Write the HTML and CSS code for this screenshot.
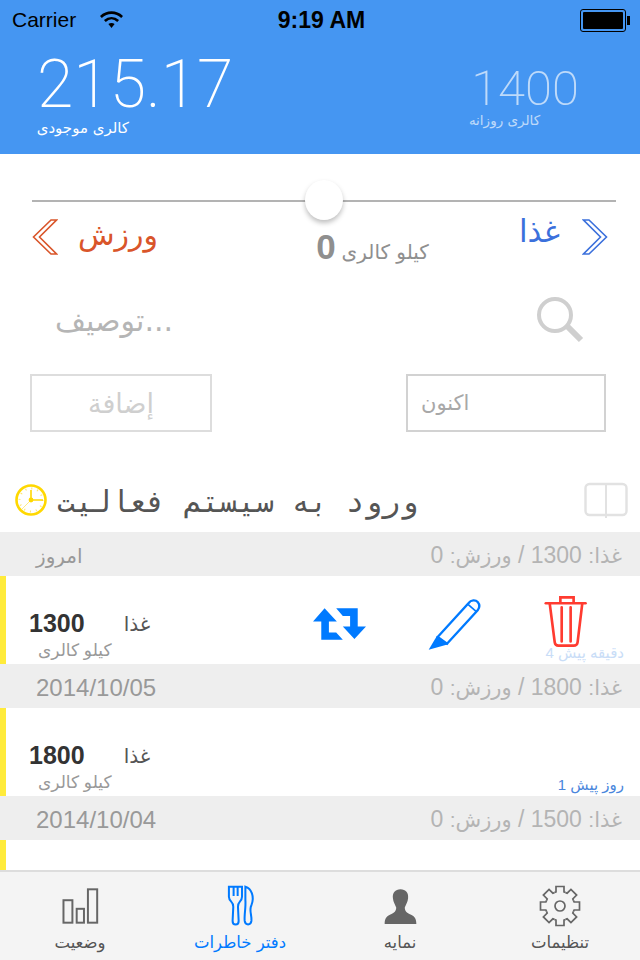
FILE: index.html
```html
<!DOCTYPE html>
<html lang="fa">
<head>
    <meta charset="UTF-8">
    <meta name="viewport" content="width=device-width, initial-scale=1.0">
    <title>Diary</title>
    <link rel="stylesheet" href="styles.css">
</head>

<body>
    <div id="app">
        <header class="top">
            <div class="status">
                <div class="status-left">
                    <span>Carrier</span>
                    <svg class="wifi" width="23" height="20" viewBox="0 0 26 22">
                        <path d="M1 7.5C8 1 18 1 25 7.5" fill="none" stroke="#000" stroke-width="3"/>
                        <path d="M5.5 12C10 8 16 8 20.5 12" fill="none" stroke="#000" stroke-width="3"/>
                        <path d="M9.5 15.5C11.5 14 14.5 14 16.5 15.5L13 20Z" fill="#000"/>
                    </svg>
                </div>
                <span class="clock">9:19 AM</span>
                <div class="battery"><div class="battery-fill"></div></div>
            </div>
            <div class="totals">
                <div class="total">
                    <div class="total-num">215.17</div>
                    <div class="total-label">کالری موجودی</div>
                </div>
                <div class="total total-daily">
                    <div class="total-num">1400</div>
                    <div class="total-label">کالری روزانه</div>
                </div>
            </div>
        </header>

        <section class="entry-form">
            <div class="slider"><span class="thumb"></span></div>

            <div class="kinds">
                <div class="kind kind-sport">
                    <svg width="26" height="36" viewBox="0 0 26 36"><path d="M19 1L1.5 18L19 35L24.5 35L7.5 18L24.5 1Z" fill="none" stroke="#d9552a" stroke-width="1.6"/></svg>
                    <span>ورزش</span>
                </div>
                <div class="kcal"><b>0</b><span>کیلو کالری</span></div>
                <div class="kind kind-food">
                    <span>غذا</span>
                    <svg width="26" height="36" viewBox="0 0 26 36"><path d="M7 1L24.5 18L7 35L1.5 35L18.5 18L1.5 1Z" fill="none" stroke="#3b70dc" stroke-width="1.6"/></svg>
                </div>
            </div>

            <div class="search">
                <span class="search-text">توصیف...</span>
                <svg width="48" height="48" viewBox="0 0 48 48">
                    <circle cx="19" cy="19" r="16" fill="none" stroke="#cfcfcf" stroke-width="4"/>
                    <path d="M31 30L45 44" stroke="#cfcfcf" stroke-width="6"/>
                </svg>
            </div>

            <div class="buttons">
                <div class="btn btn-add">إضافة</div>
                <div class="btn btn-now">اکنون</div>
            </div>
        </section>

        <div class="log-title">
            <div class="log-title-left">
                <svg width="34" height="36" viewBox="0 0 34 36">
                    <circle cx="17" cy="18" r="14.500" fill="#fff" stroke="#ffd800" stroke-width="2.600"/>
                    <circle cx="17" cy="18" r="11.500" fill="none" stroke="#ffe566" stroke-width="2" stroke-dasharray="1 5.020"/>
                    <path d="M17 8V18H29" fill="none" stroke="#ffd800" stroke-width="1.600"/>
                    <path d="M17 18L8 27" fill="none" stroke="#ffe566" stroke-width="0.800"/>
                    <circle cx="17" cy="18" r="2.400" fill="#ffd800"/>
                </svg>
                <span class="log-title-text">ورود به سیستم فعالیت</span>
            </div>
            <svg width="44" height="36" viewBox="0 0 44 36">
                <rect x="1.500" y="2" width="41" height="31" rx="4" fill="none" stroke="#e2e2e2" stroke-width="2.400"/>
                <path d="M22 2V36" stroke="#e2e2e2" stroke-width="2"/>
            </svg>
        </div>

        <div class="log">
            <div class="day">
                <span class="day-name day-today">امروز</span>
                <span class="day-sum"><i>غذا:</i> 1300 / <i>ورزش:</i> 0</span>
            </div>
            <div class="row">
                <div class="row-info">
                    <div class="row-main"><b>1300</b><span>غذا</span></div>
                    <div class="row-unit">کیلو کالری</div>
                </div>
                <div class="row-actions">
                    <svg width="53" height="32" viewBox="40 55 160 95">
                        <path d="M75 55L112 95H88V128H110L130 150H65V95H40Z" fill="#007aff"/>
                        <path d="M110 55H175V110H200L165 148L130 110H152V78H130Z" fill="#007aff"/>
                    </svg>
                    <svg width="55" height="55" viewBox="380 20 165 165">
                        <path d="M412 140L505 38C512 28 526 28 532 35C538 42 538 52 532 60L440 160Z" fill="none" stroke="#007aff" stroke-width="7"/>
                        <path d="M385 178L410 136L444 162Z" fill="#007aff"/>
                        <path d="M503 42L528 64" stroke="#007aff" stroke-width="5"/>
                    </svg>
                    <svg class="trash" width="45" height="53" viewBox="730 15 135 160">
                        <path d="M738 40H858" stroke="#ff3b30" stroke-width="8" stroke-linecap="round"/>
                        <path d="M782 40V22H822V40" fill="none" stroke="#ff3b30" stroke-width="8"/>
                        <path d="M750 42L765 158C766 165 770 168 776 168H822C828 168 833 165 834 158L848 42" fill="none" stroke="#ff3b30" stroke-width="8"/>
                        <path d="M786 52V155M813 52V155" stroke="#ff3b30" stroke-width="8" stroke-linecap="round"/>
                    </svg>
                </div>
                <span class="row-ago row-ago-fresh">دقیقه پیش 4</span>
            </div>
            <div class="day">
                <span class="day-name">2014/10/05</span>
                <span class="day-sum"><i>غذا:</i> 1800 / <i>ورزش:</i> 0</span>
            </div>
            <div class="row">
                <div class="row-info">
                    <div class="row-main"><b>1800</b><span>غذا</span></div>
                    <div class="row-unit">کیلو کالری</div>
                </div>
                <span class="row-ago">روز پیش 1</span>
            </div>
            <div class="day">
                <span class="day-name">2014/10/04</span>
                <span class="day-sum"><i>غذا:</i> 1500 / <i>ورزش:</i> 0</span>
            </div>
            <div class="row row-cut"></div>
        </div>

        <nav class="tabs">
            <div class="tab">
                <svg width="40" height="38" viewBox="60 20 120 115">
                    <rect x="70" y="60" width="27" height="68" fill="none" stroke="#666" stroke-width="6"/>
                    <rect x="110" y="86" width="22" height="42" fill="none" stroke="#666" stroke-width="6"/>
                    <rect x="144" y="27" width="28" height="101" fill="none" stroke="#666" stroke-width="6"/>
                </svg>
                <span>وضعیت</span>
            </div>
            <div class="tab tab-on">
                <svg width="29" height="42" viewBox="555 15 85 125">
                    <path d="M563 20H602V50C602 65 588 65 590 80L592 122C592 136 574 136 574 122L576 80C578 65 563 65 563 50Z" fill="none" stroke="#007aff" stroke-width="6"/>
                    <path d="M577 20V48M589 20V48" stroke="#007aff" stroke-width="6"/>
                    <path d="M612 20C630 25 640 50 630 75C622 90 632 105 630 122C628 136 612 136 610 122C608 105 614 80 612 60Z" fill="none" stroke="#007aff" stroke-width="6"/>
                </svg>
                <span>دفتر خاطرات</span>
            </div>
            <div class="tab">
                <svg width="33" height="37" viewBox="40 22 100 110">
                    <path d="M90 25C106 25 115 36 113 52C112 64 106 72 103 80C103 90 108 96 122 102C134 107 138 116 138 130H42C42 116 46 107 58 102C72 96 77 90 77 80C74 72 68 64 67 52C65 36 74 25 90 25Z" fill="#666"/>
                </svg>
                <span>نمایه</span>
            </div>
            <div class="tab">
                <svg width="42" height="42" viewBox="-21 -21 42 42">
                    <defs>
                        <path id="tooth" d="M-5.550 -13.400L-4 -14.100L-4 -19.500H4L4 -14.100L5.550 -13.400" fill="none" stroke="#666" stroke-width="1.700"/>
                    </defs>
                    <use href="#tooth"/>
                    <use href="#tooth" transform="rotate(45)"/>
                    <use href="#tooth" transform="rotate(90)"/>
                    <use href="#tooth" transform="rotate(135)"/>
                    <use href="#tooth" transform="rotate(180)"/>
                    <use href="#tooth" transform="rotate(225)"/>
                    <use href="#tooth" transform="rotate(270)"/>
                    <use href="#tooth" transform="rotate(315)"/>
                    <circle cx="0" cy="0" r="5" fill="none" stroke="#666" stroke-width="1.700"/>
                </svg>
                <span>تنظیمات</span>
            </div>
        </nav>
    </div>
</body>
</html>
```

FILE: styles.css
```css
* {
    box-sizing: border-box;
}

body {
    margin: 0;
    background-color: #fff;
    font-family: "Liberation Sans", "DejaVu Sans", sans-serif;
}

#app {
    width: 640px;
    height: 960px;
    overflow: hidden;
    display: flex;
    flex-direction: column;
}

.top {
    height: 154px;
    background-color: #4596f2;
    flex: none;
}

.status {
    height: 40px;
    padding: 0 6px 0 12px;
    display: grid;
    grid-template-columns: 1fr auto 1fr;
    align-items: center;
    color: #000;
    font-size: 21px;
}

.status-left {
    display: flex;
    align-items: center;
    gap: 24px;
}

.clock {
    font-weight: bold;
    font-size: 23px;
    margin-left: -3px;
}

.battery {
    justify-self: end;
    width: 46px;
    height: 23px;
    margin-right: 8px;
    border: 1px solid #000;
    border-radius: 3px;
    padding: 2px;
    position: relative;
}

.battery::after {
    content: "";
    position: absolute;
    right: -5px;
    top: 6px;
    width: 3px;
    height: 9px;
    background-color: #000;
}

.battery-fill {
    height: 100%;
    background-color: #000;
    border-radius: 1px;
}

.totals {
    display: flex;
    justify-content: space-between;
    padding: 0 61px 0 37px;
}

.total-num {
    font-family: Roboto, sans-serif;
    font-weight: 200;
    font-size: 66px;
    line-height: 70px;
    padding-top: 10px;
    color: #fff;
}

.total-label {
    direction: rtl;
    text-align: right;
    font-family: "DejaVu Sans", sans-serif;
    font-size: 15px;
    line-height: 18px;
    color: #fff;
    width: 92px;
    margin-top: -1px;
    white-space: nowrap;
}

.total-daily {
    padding-top: 11px;
    opacity: 0.65;
}

.total-daily .total-num {
    font-size: 49px;
    line-height: 56px;
    padding-top: 10px;
}

.total-daily .total-label {
    font-size: 13.500px;
    margin-top: -6px;
    margin-left: -1px;
    width: 70px;
}

.entry-form {
    height: 326px;
    flex: none;
    padding: 0 24px 0 30px;
}

.slider {
    height: 2px;
    margin: 46px 0 0 2px;
    background-color: #b3b3b3;
    position: relative;
}

.thumb {
    position: absolute;
    left: 273px;
    top: -20px;
    width: 38px;
    height: 40px;
    border-radius: 50%;
    background-color: #fff;
    box-shadow: 0 3px 5px rgba(0, 0, 0, 0.25);
}

.kinds {
    height: 50px;
    margin-top: 15px;
    display: flex;
    justify-content: space-between;
    align-items: flex-start;
}

.kind {
    display: flex;
    align-items: center;
    gap: 20px;
    font-family: "DejaVu Sans", sans-serif;
    font-size: 30px;
    height: 40px;
}

.kind span {
    position: relative;
    top: -3px;
}

.kind-sport {
    margin-left: 2px;
    color: #d9552a;
}

.kind-food {
    margin-right: 8px;
    gap: 22px;
    color: #3b70dc;
    font-size: 31px;
}

.kind-food span {
    top: -6px;
}

.kcal {
    display: flex;
    align-items: baseline;
    gap: 6px;
    margin: 10px 0 0 68px;
    color: #8f8f8f;
    font-family: "DejaVu Sans", sans-serif;
    font-size: 20px;
}

.kcal b {
    font-family: "Liberation Sans", sans-serif;
    font-size: 35px;
}

.search {
    display: flex;
    justify-content: space-between;
    align-items: center;
    height: 56px;
    margin: 25px 32px 0 0;
}

.search-text {
    margin-left: 25px;
    font-family: "DejaVu Sans", sans-serif;
    font-size: 30px;
    color: #b5b5b5;
}

.buttons {
    display: flex;
    justify-content: space-between;
    margin: 26px 10px 0 0;
}

.btn {
    height: 58px;
    display: flex;
    align-items: center;
    font-family: "DejaVu Sans", sans-serif;
    border: 2px solid #ddd;
}

.btn-add {
    width: 182px;
    justify-content: center;
    font-size: 27px;
    color: #cfcfcf;
}

.btn-now {
    width: 200px;
    padding-left: 13px;
    font-size: 21px;
    color: #a8a8a8;
    border-color: #d2d2d2;
}

.log-title {
    height: 46px;
    flex: none;
    padding: 0 12px 0 14px;
    margin-top: -3px;
    display: flex;
    justify-content: space-between;
    align-items: center;
}

.log-title-left {
    display: flex;
    align-items: center;
    gap: 9px;
    font-family: "DejaVu Sans Mono", monospace;
    font-size: 30px;
    color: #555;
}

.log-title-text {
    padding-top: 3px;
}

.log {
    flex: 1;
    min-height: 0;
    margin-top: 9px;
}

.day {
    height: 44px;
    background-color: #eee;
    display: flex;
    justify-content: space-between;
    align-items: center;
    padding: 3px 18px 0 36px;
    font-size: 24px;
}

.day-name {
    color: #999;
    direction: rtl;
}

.day-today {
    font-size: 20px;
}

.day-sum {
    color: #b4b4b4;
    direction: rtl;
    font-size: 23px;
}

.day-sum i {
    font-style: normal;
    font-size: 21px;
}

.row {
    height: 88px;
    border-left: 6px solid #ffeb3b;
    background-color: #fff;
    position: relative;
}

.row-cut {
    height: 30px;
}

.row-info {
    padding: 33px 0 0 23px;
}

.row-main {
    display: flex;
    align-items: center;
    gap: 39px;
}

.row-main b {
    font-size: 25px;
    color: #333;
}

.row-main span {
    font-size: 20px;
    color: #555;
}

.row-unit {
    margin: 2px 0 0 9px;
    font-size: 17px;
    color: #999;
}

.row-actions {
    position: absolute;
    top: 0;
    right: 52px;
    height: 96px;
    display: flex;
    align-items: center;
    gap: 61px;
}

.trash {
    margin-top: -5px;
}

.row-ago {
    position: absolute;
    right: 16px;
    bottom: 2px;
    font-size: 15px;
    color: #4a86dc;
    direction: rtl;
}

.row-ago-fresh {
    color: #c9ddf7;
}

.tabs {
    height: 90px;
    flex: none;
    border-top: 2px solid #ddd;
    background-color: #f4f4f4;
    display: grid;
    grid-template-columns: repeat(4, 160px);
    padding-top: 12px;
}

.tab {
    display: grid;
    grid-template-rows: 44px auto;
    justify-items: center;
    align-items: center;
    font-size: 16.500px;
    color: #555;
    font-family: "DejaVu Sans", sans-serif;
}

.tab span {
    margin-top: -4px;
}

.tab-on {
    color: #007aff;
}
```
